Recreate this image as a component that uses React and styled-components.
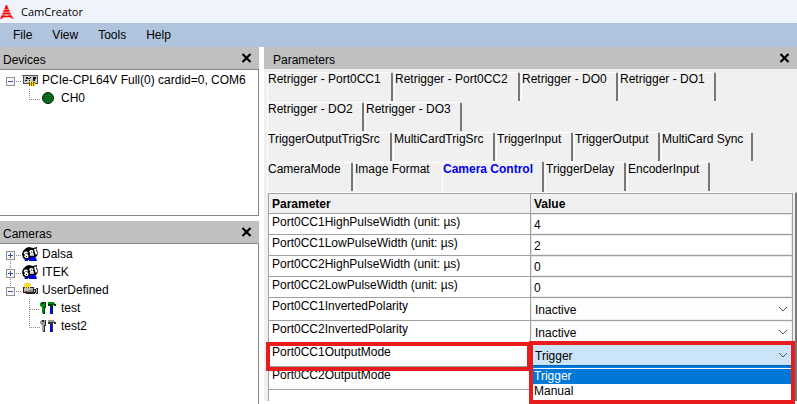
import React, { useState } from "react";
import styled, { createGlobalStyle, css } from "styled-components";

const GlobalStyle = createGlobalStyle`
  * { box-sizing: border-box; }
  html, body { margin: 0; height: 100%; }
  body {
    background: #fff;
    color: #000;
    font: 12px/16px "Liberation Sans", Arial, sans-serif;
    overflow: hidden;
  }
  button, input, select { font: inherit; color: inherit; }
`;

const Window = styled.div`
  display: flex;
  flex-direction: column;
  height: 100vh;
`;

const TitleBar = styled.header`
  display: flex;
  align-items: center;
  gap: 7px;
  flex: 0 0 23px;
  background: #eff4fb;
  font-family: "Open Sans", "Noto Sans", sans-serif;
  font-size: 11px;
`;

const MenuBar = styled.nav`
  display: flex;
  align-items: center;
  gap: 20px;
  flex: 0 0 24px;
  padding-left: 13px;
  background: #b0c4de;
`;

const MenuButton = styled.button`
  padding: 0;
  border: 0;
  background: none;
`;

const Workspace = styled.main`
  display: grid;
  grid-template-columns: 259px minmax(0, 1fr);
  gap: 5px;
  flex: 1;
  min-height: 0;
`;

const Sidebar = styled.div`
  display: flex;
  flex-direction: column;
  gap: 5px;
  min-height: 0;
`;

const Panel = styled.section`
  display: flex;
  flex-direction: column;
  flex: ${(p) => p.$flex || "1"};
  min-height: 0;
`;

const PanelHeader = styled.div`
  display: flex;
  align-items: center;
  justify-content: space-between;
  flex: 0 0 22px;
  padding: 0 ${(p) => (p.$wide ? "7px 0 9px" : "7px 0 3px")};
  background: #c0c0c0;
`;

const PanelTitle = styled.h2`
  margin: 0;
  padding-top: 3px;
  font-size: 12px;
  font-weight: 400;
`;

const CloseButton = styled.button`
  display: flex;
  padding: 0;
  border: 0;
  background: none;
`;

const Tree = styled.ul`
  flex: 1;
  margin: 0;
  padding: 1px 0 0;
  list-style: none;
  border: 1px solid #828790;
  border-width: 1px 1px ${(p) => (p.$open ? "0" : "1px")} 0;
`;

const TreeRow = styled.li`
  display: flex;
  align-items: center;
  height: 18px;
  padding-left: ${(p) => (p.$child ? "25px" : "5px")};
  white-space: nowrap;
`;

const Expander = styled.button`
  display: flex;
  padding: 0;
  border: 0;
  background: none;
`;

const TreeIcon = styled.span`
  display: flex;
  width: ${(p) => (p.$child ? "21px" : "20px")};
`;

const ParameterBody = styled.div`
  display: flex;
  flex-direction: column;
  flex: 1;
  min-height: 0;
  margin-bottom: 3px;
  padding: 3px 0 0 2px;
  background: #f0f0f0;
`;

const TabRow = styled.div`
  display: flex;
  flex: 0 0 30px;
  padding-left: 1px;
`;

const Tab = styled.button`
  flex: 0 0 ${(p) => p.$width}px;
  height: 29px;
  padding: 0;
  border: 1px solid #fff;
  border-right: 2px solid #777;
  border-bottom: 0;
  border-radius: 2px 2px 0 0;
  background: #f0f0f0;
  display: flex;
  align-items: flex-start;
  line-height: 12px;
  white-space: nowrap;
  & + & { margin-left: 1px; }
  &:has(+ [aria-selected="true"]) { border-right-width: 0; }
  [aria-selected="true"] + & { margin-left: 0; }
  ${(p) =>
    p.$selected &&
    css`
      height: 31px;
      margin-top: -1px;
      padding-top: 1px;
      color: #0000ee;
      font-weight: 700;
      z-index: 1;
      & { margin-left: 0; }
    `}
`;

const TabPage = styled.div`
  flex: 1;
  min-height: 0;
  padding: 0 2px 0 2px;
  border-top: 1px solid #fff;
  border-right: 2px solid #777;
`;

const Table = styled.table`
  width: 100%;
  table-layout: fixed;
  border-collapse: collapse;
  background: #fff;
`;

const HeadCell = styled.th`
  height: 20px;
  padding: 0 3px;
  border: 1px solid #a0a0a0;
  background: #f0f0f0;
  text-align: left;
  font-size: 12px;
  line-height: 16px;
`;

const Cell = styled.td`
  position: relative;
  height: ${(p) => (p.$tall ? "23px" : "21px")};
  padding: ${(p) => (p.$value ? "0" : "0 3px")};
  border: 1px solid #a0a0a0;
  vertical-align: top;
`;

const EmptyCell = styled.td`
  height: 11px;
  padding: 0;
  border: 1px solid #a0a0a0;
  border-bottom: 0;
`;

const NumberInput = styled.input`
  display: block;
  width: 100%;
  height: 20px;
  padding: 2px 2px 0;
  border: 1px solid #e8e8e8;
  outline: 0;
`;

const Picker = styled.div`
  position: relative;
  display: grid;
  align-items: center;
`;

const Select = styled.select`
  grid-area: 1 / 1;
  width: 100%;
  height: 22px;
  padding: 2px 20px 0 3px;
  border: 1px solid ${(p) => (p.$open ? "#0067c0" : "#f0f0f0")};
  border-radius: 0;
  outline: 0;
  appearance: none;
  background: ${(p) => (p.$open ? "#cce4f7" : "#fdfdfd")};
`;

const Arrow = styled.svg`
  grid-area: 1 / 1;
  justify-self: end;
  margin-right: 4px;
  pointer-events: none;
`;

const Options = styled.ul`
  position: absolute;
  z-index: 1;
  top: 100%;
  left: 0;
  right: 0;
  margin: 0;
  padding: 1px 0;
  border: 1px solid #0078d7;
  border-top-width: 2px;
  background: #fff;
  list-style: none;
`;

const Option = styled.li`
  height: 15px;
  padding-left: 2px;
  line-height: 15px;
  ${(p) => p.$active && "background: #0078d7; color: #fff;"}
`;

const Marker = styled.div`
  position: absolute;
  z-index: 2;
  inset: ${(p) => (p.$open ? "-3px -3px -38px -2px" : "-2px -1px -5px -3px")};
  border: 4px solid #e81c1c;
  pointer-events: none;
`;

const Logo = () => (
  <svg width="14" height="16" viewBox="0 0 14 16" aria-hidden="true">
    <path fill="#f00" d="M6 1h1l1.6 4H4.4zM4 5.6h5l.9 2.2H3.1zM2.8 8.4h7.4l.9 2.2H1.9zM1.6 11.2h3.6l-.6 1.5L0 15.500zM7.800 11.200h3.600L14 15.500l-4.800-2.800z" />
    <path stroke="#f00" strokeWidth="1.500" d="M4 12.500h6" />
  </svg>
);

const CloseIcon = () => (
  <svg width="11" height="10" viewBox="0 0 11 10" aria-hidden="true">
    <path stroke="#000" strokeWidth="2.2" d="M1.500 1l8 8M9.500 1l-8 8" />
  </svg>
);

const ExpanderIcon = ({ open, up, down }) => (
  <svg width="17" height="18" viewBox="0 0 17 18" aria-hidden="true" shapeRendering="crispEdges">
    {up && <path stroke="#888" strokeDasharray="1 1" d="M5.5 0v6" />}
    {down && <path stroke="#888" strokeDasharray="1 1" d="M5.5 14v4" />}
    <path stroke="#888" strokeDasharray="1 1" d="M11 10.5h6" />
    <rect x="1.5" y="6.5" width="8" height="8" rx="1" fill="#f6f6f6" stroke="#919191" />
    <path stroke="#3554a4" d={open ? "M3 10.5h5" : "M3 10.5h5M5.5 8v5"} />
  </svg>
);

const Branch = ({ last }) => (
  <svg width="15" height="18" viewBox="0 0 15 18" aria-hidden="true" shapeRendering="crispEdges">
    <path stroke="#888" strokeDasharray="1 1" fill="none" d={last ? "M4.5 0v10.5H15" : "M4.5 0v18M5 10.5h10"} />
  </svg>
);

const CardIcon = () => (
  <svg width="16" height="16" viewBox="0 0 16 16" aria-hidden="true" shapeRendering="crispEdges">
    <path fill="#555" d="M0 3h16v9H1V4H0z" />
    <path fill="#c9c9c9" d="M2 4h13v7H2z" />
    <path fill="#111" d="M4 5h2v2H4zM8 5h1v1H8zM11 5h3v2h-1v2h-2zM6 6h2v1H6zM3 8h2v1H3zM7 8h1v1H7z" />
    <path fill="#806000" d="M7 10h6v4H7z" />
    <path fill="#ffe000" d="M8 9h1v5H8zM10 9h1v5h-1zM12 11h1v3h-1z" />
  </svg>
);

const ChannelIcon = () => (
  <svg width="16" height="16" viewBox="0 0 16 16" aria-hidden="true">
    <circle cx="8" cy="8" r="5.5" fill="#087a20" stroke="#001c04" />
    <path stroke="#002c08" strokeWidth="1" strokeDasharray="1 1" d="M4 6.500h8M3 8.500h10M4 10.500h8M5 4.500h6" />
  </svg>
);

const VendorIcon = () => (
  <svg width="16" height="16" viewBox="0 0 16 16" aria-hidden="true">
    <path fill="#000" d="M0 8l1-3 3-3 3-1 4 1 4-1v3l1 3-1 3-3 2v2H4l-3-2z" />
    <path fill="#fff" d="M1.500 7l1.500-1.500h2L6 7 5 8l1.500 1.500L6 12H4l-2-1.500L3 9zM7 5.500L8.500 4h2l1 1.500-1 1 1.500 1.500-.5 2H9L7.500 9l1-1.500zM12 3l3-.5-1 2 1.500 2.500L14 9l-1-2z" />
    <path fill="#000" d="M3.500 7h1v1h-1zM4 10h1v1H4zM9 5.500h1v1H9zM9.500 8.500h1v1h-1z" />
    <path fill="#0000f0" d="M7 12l3-1.500 4 1 1 3.500H7zM2 13.500h4V15H3z" />
  </svg>
);

const CameraIcon = () => (
  <svg width="16" height="16" viewBox="0 0 16 16" aria-hidden="true" shapeRendering="crispEdges">
    <path fill="#222" d="M1 5h11v2h2V6h2v6h-2v-1h-1v1H4v-1H1z" />
    <path fill="#bbb" d="M2 6h9v4H2zM12 8h1v2h-1zM14 7h1v4h-1z" />
    <path fill="#888" d="M6 8h5v2H6z" />
    <path fill="#e00000" d="M3 9h2v1H3z" />
    <path fill="#a89400" d="M2 1h7v5H2z" opacity=".35" />
    <path fill="#ffe800" d="M5 0h1v2h1V1h1v1H7v1h2v1H7v1h1v1H7V5H6v2H5V5H4v1H3V5h1V4H2V3h2V2H3V1h1v1h1z" />
  </svg>
);

const ToolsIcon = ({ color, edge }) => (
  <svg width="16" height="16" viewBox="0 0 16 16" aria-hidden="true" shapeRendering="crispEdges">
    <path fill={edge} d="M2 2h3l1 1v4L5 8v6H3V8L1 6z" />
    <path fill={color} d="M1 2h1v2h2V2h1v4L4 7v6H2V7L0 6V3z" />
    <path fill={edge} d="M8 3h7l1 2v1h-2V5h-1v9h-3V6H8z" />
    <path fill={color} d="M8 2h6l1 2H8z" />
    <path fill="#0000f0" d="M10 7h2v7h-2z" />
  </svg>
);

const tabRows = [
  [["Retrigger - Port0CC1", 126], ["Retrigger - Port0CC2", 126], ["Retrigger - DO0", 97], ["Retrigger - DO1", 97]],
  [["Retrigger - DO2", 97], ["Retrigger - DO3", 97]],
  [["TriggerOutputTrigSrc", 125], ["MultiCardTrigSrc", 102], ["TriggerInput", 77], ["TriggerOutput", 86], ["MultiCard Sync", 92]],
  [["CameraMode", 86], ["Image Format", 87], ["Camera Control", 102], ["TriggerDelay", 81], ["EncoderInput", 83]],
];

const numeric = [
  ["Port0CC1HighPulseWidth (unit: µs)", "4"],
  ["Port0CC1LowPulseWidth (unit: µs)", "2"],
  ["Port0CC2HighPulseWidth (unit: µs)", "0"],
  ["Port0CC2LowPulseWidth (unit: µs)", "0"],
];

const choices = [
  { name: "Port0CC1InvertedPolarity", options: ["Inactive", "Active"] },
  { name: "Port0CC2InvertedPolarity", options: ["Inactive", "Active"] },
  { name: "Port0CC1OutputMode", options: ["Trigger", "Manual"], open: true },
  { name: "Port0CC2OutputMode", options: ["Trigger", "Manual"] },
];

function Header({ title, wide }) {
  return (
    <PanelHeader $wide={wide}>
      <PanelTitle>{title}</PanelTitle>
      <CloseButton aria-label={`Close ${title}`}><CloseIcon /></CloseButton>
    </PanelHeader>
  );
}

function Node({ label, icon, open, up, down }) {
  return (
    <TreeRow>
      <Expander aria-label={`Toggle ${label}`}><ExpanderIcon open={open} up={up} down={down} /></Expander>
      <TreeIcon>{icon}</TreeIcon>
      {label}
    </TreeRow>
  );
}

function Leaf({ label, icon, last }) {
  return (
    <TreeRow $child>
      <Branch last={last} />
      <TreeIcon $child>{icon}</TreeIcon>
      {label}
    </TreeRow>
  );
}

function ChoiceRow({ name, options, open }) {
  const [value, setValue] = useState(options[0]);
  return (
    <tr>
      <Cell $tall>
        <label htmlFor={name}>{name}</label>
        {open && <Marker />}
      </Cell>
      <Cell $tall $value>
        <Picker>
          <Select id={name} value={value} $open={open} onChange={(e) => setValue(e.target.value)}>
            {options.map((o) => <option key={o}>{o}</option>)}
          </Select>
          <Arrow width="10" height="6" viewBox="0 0 10 6" aria-hidden="true">
            <path d="M1 1l4 4 4-4" fill="none" stroke="#555" />
          </Arrow>
          {open && (
            <Options role="listbox" aria-label={name}>
              {options.map((o) => (
                <Option key={o} role="option" aria-selected={o === value} $active={o === value} onClick={() => setValue(o)}>
                  {o}
                </Option>
              ))}
            </Options>
          )}
        </Picker>
        {open && <Marker $open />}
      </Cell>
    </tr>
  );
}

export default function App() {
  const [selected, setSelected] = useState("Camera Control");
  return (
    <Window>
      <GlobalStyle />
      <TitleBar><Logo />CamCreator</TitleBar>
      <MenuBar>
        {["File", "View", "Tools", "Help"].map((m) => <MenuButton key={m}>{m}</MenuButton>)}
      </MenuBar>
      <Workspace>
        <Sidebar>
          <Panel $flex="0 0 169px">
            <Header title="Devices" />
            <Tree>
              <Node label="PCIe-CPL64V Full(0) cardid=0, COM6" icon={<CardIcon />} open />
              <Leaf label="CH0" icon={<ChannelIcon />} last />
            </Tree>
          </Panel>
          <Panel>
            <Header title="Cameras" />
            <Tree $open>
              <Node label="Dalsa" icon={<VendorIcon />} down />
              <Node label="ITEK" icon={<VendorIcon />} up down />
              <Node label="UserDefined" icon={<CameraIcon />} open up />
              <Leaf label="test" icon={<ToolsIcon color="#008a10" edge="#003c00" />} />
              <Leaf label="test2" icon={<ToolsIcon color="#999" edge="#333" />} last />
            </Tree>
          </Panel>
        </Sidebar>
        <Panel>
          <Header title="Parameters" wide />
          <ParameterBody>
            {tabRows.map((row) => (
              <TabRow key={row[0][0]} role="tablist">
                {row.map(([label, width]) => (
                  <Tab
                    key={label}
                    role="tab"
                    aria-selected={label === selected}
                    $selected={label === selected}
                    $width={width}
                    onClick={() => setSelected(label)}
                  >
                    {label}
                  </Tab>
                ))}
              </TabRow>
            ))}
            <TabPage>
              <Table>
                <thead>
                  <tr>
                    <HeadCell>Parameter</HeadCell>
                    <HeadCell>Value</HeadCell>
                  </tr>
                </thead>
                <tbody>
                  {numeric.map(([name, value]) => (
                    <tr key={name}>
                      <Cell><label htmlFor={name}>{name}</label></Cell>
                      <Cell $value><NumberInput id={name} defaultValue={value} /></Cell>
                    </tr>
                  ))}
                  {choices.map((c) => <ChoiceRow key={c.name} {...c} />)}
                  <tr>
                    <EmptyCell />
                    <EmptyCell />
                  </tr>
                </tbody>
              </Table>
            </TabPage>
          </ParameterBody>
        </Panel>
      </Workspace>
    </Window>
  );
}
